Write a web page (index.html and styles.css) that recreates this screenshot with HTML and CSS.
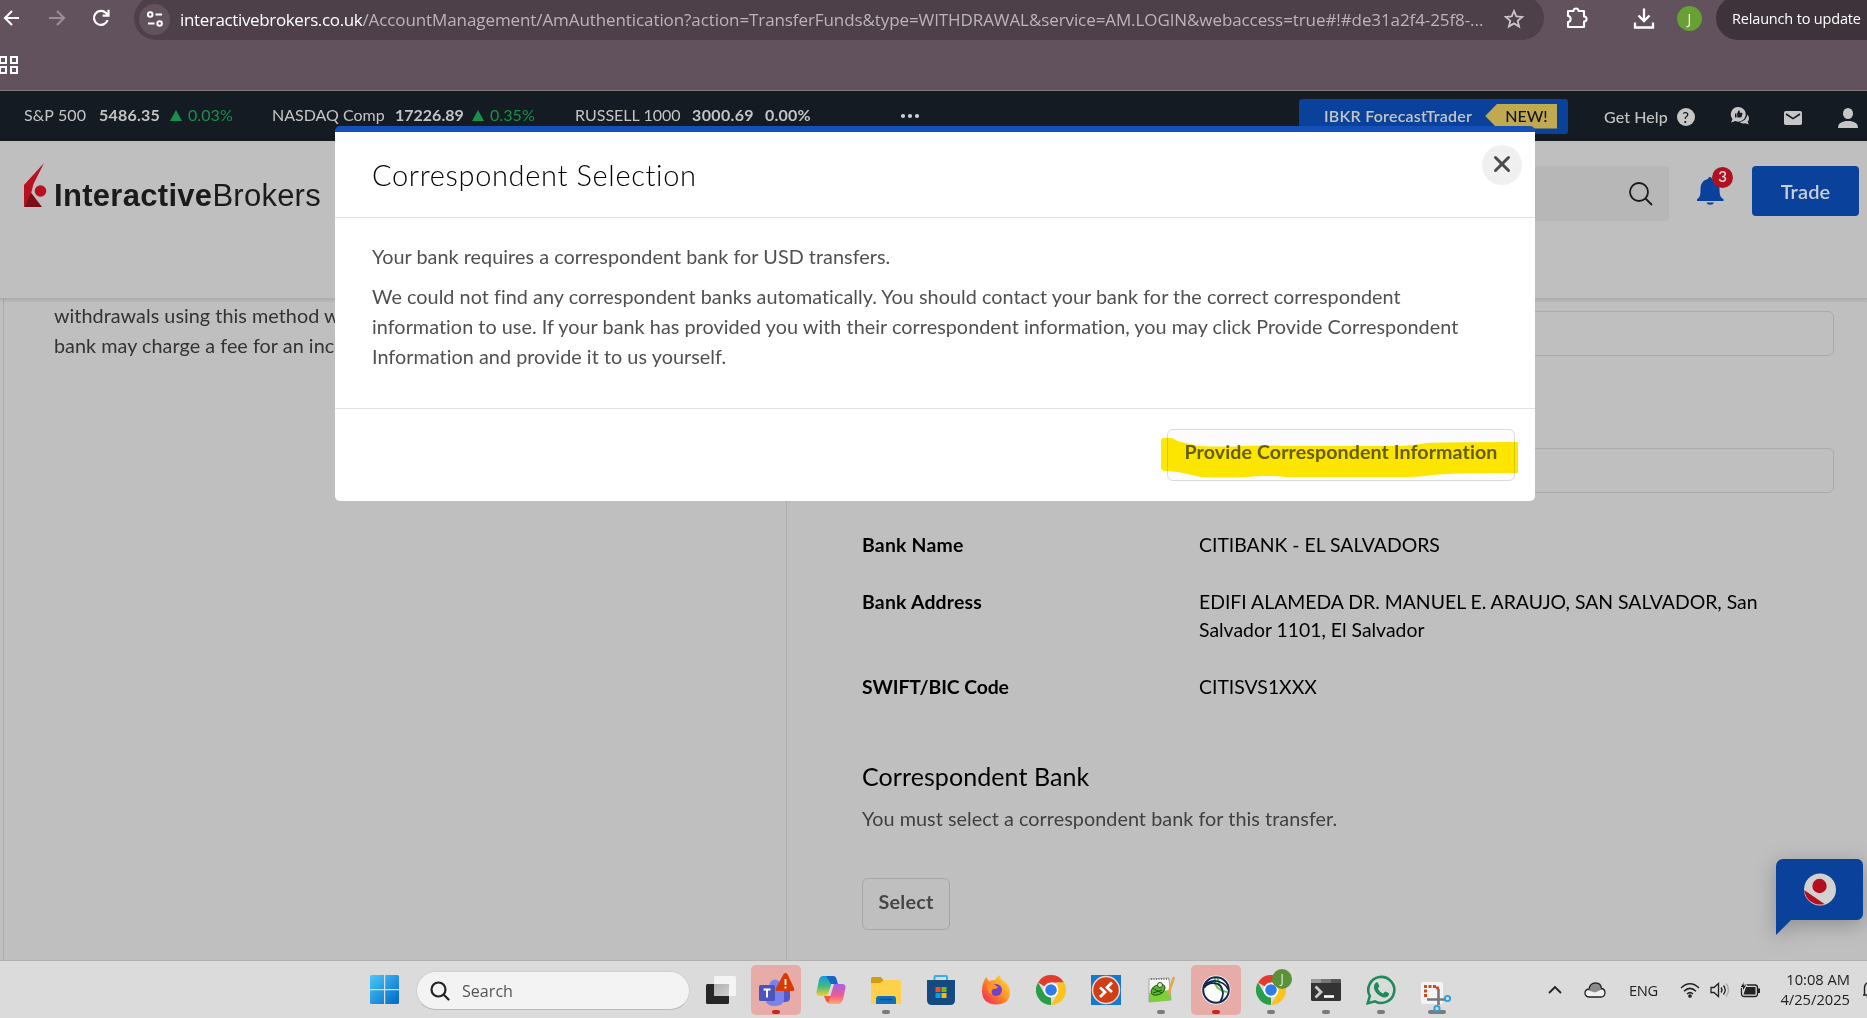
FILE: index.html
```html
<!DOCTYPE html>
<html lang="en">
<head>
<meta charset="utf-8">
<title>Correspondent Selection</title>
<link rel="stylesheet" href="styles.css">
</head>
<body>
<div class="browser">
  <div class="toolbar">
    <svg class="tb-back" width="24" height="24" viewBox="0 0 24 24" fill="none" stroke="#fff" stroke-width="2.1"><path d="M19 12H5M12 5l-7 7 7 7"/></svg>
    <svg class="tb-fwd" width="24" height="24" viewBox="0 0 24 24" fill="none" stroke="#9b8f97" stroke-width="2.1"><path d="M4 12h15M12 5l7 7-7 7"/></svg>
    <svg class="tb-reload" width="24" height="24" viewBox="0 0 24 24" fill="none" stroke="#fff" stroke-width="2.2"><path d="M18.6 14.2a7 7 0 1 1-1.8-7.4L19 9"/><path d="M19.5 3.8v5.8h-5.8"/></svg>
    <div class="url">
      <span class="tune"><svg width="18" height="18" viewBox="0 0 18 18" fill="none" stroke="#fff" stroke-width="1.9"><circle cx="4.2" cy="4.5" r="2.3"/><path d="M9.5 4.5H16M2 13.5h6.5"/><circle cx="13.6" cy="13.5" r="2.3"/></svg></span>
      <span class="domain">interactivebrokers.co.uk</span><span class="path">/AccountManagement/AmAuthentication?action=TransferFunds&amp;type=WITHDRAWAL&amp;service=AM.LOGIN&amp;webaccess=true#!#de31a2f4-25f8-...</span>
      <svg class="star" width="22" height="22" viewBox="0 0 24 24" fill="none" stroke="#cdc5ca" stroke-width="1.9"><path d="M12 3.2l2.5 6 6.5.5-5 4.2 1.6 6.4-5.6-3.5-5.6 3.5L8 13.900 3 9.700l6.500-.5z"/></svg>
    </div>
    <svg class="tb-ext" width="24" height="24" viewBox="0 0 24 24" fill="none" stroke="#fff" stroke-width="2.1" stroke-linejoin="round"><path d="M3 5h5.500c0-3.400 5-3.400 5 0H19v5.500c3.400 0 3.400 5 0 5V21H3v-5c3.500-.3 3.500-5.700 0-6z"/></svg>
    <span class="tb-sep"></span>
    <svg class="tb-dl" width="24" height="24" viewBox="0 0 24 24" fill="none" stroke="#fff" stroke-width="2.3"><path d="M12 2.500v12M6.500 9.500l5.500 5.500 5.500-5.500M3 16.500V21.500h18v-5"/></svg>
    <span class="avatar">J</span>
    <span class="relaunch">Relaunch to update</span>
  </div>
  <svg class="apps" width="18" height="18" viewBox="0 0 18 18" fill="none" stroke="#fff" stroke-width="2"><path d="M0 1h6v6H0zM11 1h6v6h-6zM0 11h6v6H0zM11 11h6v6h-6z"/></svg>
</div>

<div class="ticker">
  <div class="quote q1"><span class="sym">S&amp;P 500</span><b>5486.35</b><i></i><em>0.03%</em></div>
  <div class="quote q2"><span class="sym">NASDAQ Comp</span><b>17226.89</b><i></i><em>0.35%</em></div>
  <div class="quote q3"><span class="sym">RUSSELL 1000</span><b>3000.69</b><b class="flat">0.00%</b></div>
  <svg class="dots" width="20" height="6" viewBox="0 0 20 6" fill="#d0d0d0"><circle cx="3" cy="3" r="2.100"/><circle cx="10" cy="3" r="2.100"/><circle cx="17" cy="3" r="2.100"/></svg>
  <div class="forecast"><span class="fc-name">IBKR ForecastTrader</span><span class="new">NEW!</span></div>
  <div class="help"><span>Get Help</span><span class="qmark">?</span></div>
  <svg class="t-chat" width="20" height="20" viewBox="0 0 20 20"><path fill="#c6c6c6" d="M8.500 1a7.300 7.300 0 1 1-3.200 13.900L1 16.500l1.500-3.600A7.300 7.300 0 0 1 8.500 1z"/><path fill="#151b22" d="M5 7.500h1.500v4H5zM7.200 7.300l1.500-3c1.300 0 1.300 1.200 1 2.500h2c1 0 .9 1 .6 1.600l-.8 2.500c-.3.800-4.300.6-4.300 0z"/><path fill="#c6c6c6" d="M17.200 8.500c2.600 2.600 2 6 .4 7.300l1.200 2.700-3.500-1.300c-2.500.6-4.600 0-5.800-1.400 4 0 7.700-3.200 7.700-7.300z"/></svg>
  <svg class="t-mail" width="18" height="14" viewBox="0 0 18 14"><rect width="18" height="14" rx="1.800" fill="#c6c6c6"/><path d="M2 3l7 4.600L16 3" fill="none" stroke="#151b22" stroke-width="1.700"/></svg>
  <svg class="t-user" width="20" height="20" viewBox="0 0 20 20" fill="#c6c6c6"><ellipse cx="10" cy="5.500" rx="5" ry="5.500"/><path d="M0 20c0-5 4-7 10-7s10 2 10 7z"/></svg>
</div>

<header class="site-header">
  <div class="logo">
    <svg width="24" height="44" viewBox="0 0 24 44"><path fill="#b90f20" d="M20 0L0 22v22l7-13.500L9.500 21z"/><path fill="#7d0e18" d="M0 44L7 29.500 18 44z"/><circle cx="16.500" cy="28" r="5.800" fill="#b90f20"/></svg>
    <span class="logo-bold">Interactive</span><span class="logo-light">Brokers</span>
  </div>
  <div class="search-box"><svg width="26" height="26" viewBox="0 0 26 26" fill="none" stroke="#1a1a1a" stroke-width="1.800"><circle cx="11" cy="11" r="9"/><path d="M17.500 17.500l6.500 6.500"/></svg></div>
  <div class="bell">
    <svg width="27" height="28" viewBox="0 0 27 28" fill="#0a429b"><path d="M13 0c1.500 0 2 1 2 2 5 1 7.500 5 7.500 10 0 6 1 8.500 4 10v2H0v-2c3-1.500 3.500-4 3.500-10 0-5 2.500-9 7.500-10 0-1 .5-2 2-2z"/><path d="M9.500 25.500h7.500c-1 3-6.500 3-7.500 0z"/></svg>
    <span class="badge">3</span>
  </div>
  <button class="trade">Trade</button>
</header>

<main class="content">
  <section class="left-panel">
    <p>withdrawals using this method will<br>bank may charge a fee for an incoming</p>
  </section>
  <section class="right-panel">
    <div class="field f1"></div>
    <div class="field f2"></div>
    <dl class="details">
      <dt>Bank Name</dt><dd>CITIBANK - EL SALVADORS</dd>
      <dt>Bank Address</dt><dd>EDIFI ALAMEDA DR. MANUEL E. ARAUJO, SAN SALVADOR, San<br>Salvador 1101, El Salvador</dd>
      <dt class="swift">SWIFT/BIC Code</dt><dd>CITISVS1XXX</dd>
    </dl>
    <h2>Correspondent Bank</h2>
    <p class="note">You must select a correspondent bank for this transfer.</p>
    <button class="select">Select</button>
  </section>
</main>

<div class="chat-widget">
  <svg width="88" height="77" viewBox="0 0 88 77"><path fill="#0a429b" d="M7 0h74a6 6 0 0 1 6 6v49a6 6 0 0 1-6 6H15L0 76V7a7 7 0 0 1 7-7z"/><circle cx="44" cy="30.500" r="16" fill="#d2d2d2"/><path fill="#b51020" d="M28.200 31l20.300 14A16 16 0 0 1 28.200 31z"/><circle cx="43.500" cy="27" r="7.200" fill="#b51020"/></svg>
</div>

<div class="modal">
  <div class="modal-head">
    <h1>Correspondent Selection</h1>
    <button class="close"><svg width="18" height="18" viewBox="0 0 18 18" stroke="#4a4a4a" stroke-width="3" stroke-linecap="round"><path d="M2.500 2.500l13 13M15.500 2.500l-13 13"/></svg></button>
  </div>
  <div class="modal-body">
    <p class="l1">Your bank requires a correspondent bank for USD transfers.</p>
    <p>We could not find any correspondent banks automatically. You should contact your bank for the correct correspondent<br>information to use. If your bank has provided you with their correspondent information, you may click Provide Correspondent<br>Information and provide it to us yourself.</p>
  </div>
  <div class="modal-foot">
    <button class="provide">Provide Correspondent Information</button>
    <svg class="marker" width="358" height="40" viewBox="0 0 358 40"><path fill="#ffe800" d="M0 2q0-2 3-2l8 0q6 4 14 5l12 3q30 1 45 0t40 0h110q20 0 34-3 15-1 91-1v31q-70 0-85 2-12 2-26 2H125q-20-2-40 0-20 1-45 0l-23-5-12-1q-5 0-5-3z"/></svg>
  </div>
</div>

<footer class="taskbar">
  <div class="tk win"><svg width="30" height="30" viewBox="0 0 30 30"><defs><linearGradient id="w" x1="0" y1="0" x2="1" y2="1"><stop offset="0" stop-color="#4cc8fb"/><stop offset="1" stop-color="#0067c5"/></linearGradient></defs><path fill="url(#w)" d="M1.500 0H14v14H0V1.500Q0 0 1.500 0zM15.200 0h12.300Q29 0 29 1.500V14H15.200zM0 15.200h14V29H1.500Q0 29 0 27.500zM15.200 15.200H29v12.300q0 1.500-1.500 1.500H15.200z"/></svg></div>
  <div class="tk-search"><svg width="20" height="20" viewBox="0 0 20 20" fill="none" stroke="#222" stroke-width="2.200" stroke-linecap="round"><circle cx="8.500" cy="8.500" r="7"/><path d="M13.800 13.800L18.500 18.500"/></svg><span>Search</span></div>
  <div class="tk"><svg width="30" height="28" viewBox="0 0 30 28"><defs><linearGradient id="tv" x1="0" y1="0" x2="1" y2="1"><stop offset="0" stop-color="#b0b0b0"/><stop offset="1" stop-color="#cfcfcf"/></linearGradient></defs><rect y="8" width="23" height="20" rx="1.500" fill="#262626"/><rect x="8" width="22" height="20" rx="1.500" fill="#f4f4f4"/><path d="M8 8h15v12H8z" fill="url(#tv)"/></svg></div>
  <div class="tk alert run"><svg width="38" height="36" viewBox="0 0 38 36"><circle cx="18" cy="13" r="5.500" fill="#7b83eb"/><circle cx="28" cy="15" r="4" fill="#5059c9"/><path fill="#5059c9" d="M24 17h9v9q0 4-5 4h-4z"/><path fill="#7b83eb" d="M9 17h18v10q0 7-9 7t-9-6z"/><rect x="2" y="13" width="16" height="16" rx="1.500" fill="#4b53bc"/><path d="M6.500 17.500h7M10 17.500v8" stroke="#fff" stroke-width="1.900"/><path fill="#d83b01" d="M28.500 1q1.300 0 2 1.300L37 16q1 3-1.500 3h-15q-2.500 0-1.500-3L26.500 2.300Q27.200 1 28.500 1z"/><path d="M28.500 7v6M28.500 14.500v2" stroke="#fff" stroke-width="1.800"/></svg></div>
  <div class="tk"><svg width="30" height="28" viewBox="0 0 30 28"><defs><linearGradient id="c1" x1="0" y1="0" x2="0" y2="1"><stop offset="0" stop-color="#159be0"/><stop offset=".5" stop-color="#42b883"/><stop offset="1" stop-color="#f5d02b"/></linearGradient><linearGradient id="c2" x1="0" y1="0" x2="0" y2="1"><stop offset="0" stop-color="#a661e8"/><stop offset=".6" stop-color="#ef5d8b"/><stop offset="1" stop-color="#ffac6b"/></linearGradient></defs><path fill="url(#c1)" d="M7 0h11L12 18q-1 2-4 2H4q-4 0-3.500-4L3 4q1-4 4-4z"/><path fill="#1765c4" d="M10 0h7q3 0 3.500 3l1.500 5h-7z"/><path fill="#ee5a2b" d="M8 20h7l-1 6q-2 2-4-1z"/><path fill="url(#c2)" d="M18 8h8q4 0 3.500 4L27 23q-1 5-5 5H12z"/></svg></div>
  <div class="tk run"><svg width="30" height="27" viewBox="0 0 30 27"><path fill="#d49a12" d="M0 2q0-2 2-2h8l3 4-2 3H0z"/><path fill="#ffd04a" d="M0 6h9l4-3h15q2 0 2 2v22H0z"/><path fill="#0f70c0" d="M5 27v-5q0-3 3-3h14q3 0 3 3v5z"/><path d="M9 22.500h12" stroke="#0b4f90" stroke-width="1.500"/></svg></div>
  <div class="tk"><svg width="30" height="30" viewBox="0 0 30 30"><path d="M8.500 5V2q0-1 1-1h10.500q1 0 1 1v3" fill="none" stroke="#35b0ea" stroke-width="2"/><path fill="#154a80" d="M1 5h28v20q0 5-5 5H6q-5 0-5-5z"/><path fill="#f25022" d="M9.500 12h5v5h-5z"/><path fill="#7fba00" d="M15.500 12h5v5h-5z"/><path fill="#00a4ef" d="M9.500 18h5v5h-5z"/><path fill="#ffb900" d="M15.500 18h5v5h-5z"/></svg></div>
  <div class="tk"><svg width="30" height="30" viewBox="0 0 30 30"><defs><linearGradient id="f" x1="1" y1="0" x2="0" y2="1"><stop offset="0" stop-color="#fff04a"/><stop offset=".5" stop-color="#ff8a24"/><stop offset="1" stop-color="#f0195e"/></linearGradient></defs><path fill="url(#f)" d="M3 6l2-4 3 4q3-1 6-1 1-3 5-5 0 4 4 6 6 4 6 11 0 12-13.500 12.500Q1 29 1 16q0-6 2-10z"/><circle cx="15" cy="15" r="6" fill="#7340d0"/><path fill="#ff9420" d="M6 10q5-3 8 0l3 2q-1 2-5 2-3 3 0 6-6-1-6-10z"/></svg></div>
  <div class="tk"><svg width="30" height="30" viewBox="0 0 48 48"><path fill="#e33b2e" d="M24 24L3.200 12A24 24 0 0 1 44.800 12H24z"/><path fill="#2a9d4a" d="M3.200 12L13.600 30 24 36 24 48A24 24 0 0 1 3.200 12z"/><path fill="#fcc31e" d="M44.800 12A24 24 0 0 1 24 48l10.400-18L34 12z"/><circle cx="24" cy="24" r="12" fill="#fff"/><circle cx="24" cy="24" r="9.300" fill="#2f7bea"/></svg></div>
  <div class="tk"><svg width="30" height="30" viewBox="0 0 30 30"><path fill="#1579cf" d="M0 0h30v30H0z"/><circle cx="15" cy="15" r="13.500" fill="#cf3e14" stroke="#f3d6cc" stroke-width="1.500"/><path d="M9 12.500l5 4.500-5 5M21 7.500l-5 5 5 4.500" fill="none" stroke="#fff" stroke-width="2.800"/></svg></div>
  <div class="tk run"><svg width="30" height="30" viewBox="0 0 30 30"><path fill="#f8f8f2" stroke="#8a8a8a" stroke-width=".7" d="M3 4l20-1 2 22-22 2z"/><path fill="#7ccf34" d="M3 18l21-3 1 10-22 2z"/><path fill="#54b72a" stroke="#24521a" d="M5 16q2-6 8-6 6-2 6 3-1 6-8 7-6 1-6-4z"/><circle cx="14" cy="10" r="2.500" fill="#dff2c8" stroke="#24521a"/><path d="M7 18l9-3M6 13l10 5" stroke="#24521a"/><path d="M5 4h18" stroke="#777" stroke-width="2" stroke-dasharray="1 1.500"/><path d="M28 2l-6 18" stroke="#dfa64b" stroke-width="2.500"/></svg></div>
  <div class="tk alert run"><svg width="30" height="30" viewBox="0 0 30 30"><circle cx="15" cy="15" r="14.500" fill="#fff"/><path d="M14 3q-2 11 12 14M18 11q1-4-2-8" fill="none" stroke="#6cc04a" stroke-width="2"/><circle cx="15" cy="15" r="12.800" fill="none" stroke="#14284f" stroke-width="2"/><path d="M3 13q3-5 9-5 9 0 10 10 0 5-3 9M4 9.500q8-6 16-2 5 2 7 7" fill="none" stroke="#14284f" stroke-width="1.800"/></svg></div>
  <div class="tk run chrome-user"><svg width="30" height="30" viewBox="0 0 48 48"><path fill="#e33b2e" d="M24 24L3.200 12A24 24 0 0 1 44.800 12H24z"/><path fill="#2a9d4a" d="M3.200 12L13.600 30 24 36 24 48A24 24 0 0 1 3.200 12z"/><path fill="#fcc31e" d="M44.800 12A24 24 0 0 1 24 48l10.400-18L34 12z"/><circle cx="24" cy="24" r="12" fill="#fff"/><circle cx="24" cy="24" r="9.300" fill="#2f7bea"/></svg><span class="jbadge">J</span></div>
  <div class="tk run"><svg width="30" height="22" viewBox="0 0 30 22"><rect width="30" height="22" rx="1.500" fill="#333"/><path fill="#999" d="M0 1.500Q0 0 1.500 0H10v4H0z"/><path fill="#777" d="M10 0h10v4H10z"/><path fill="#555" d="M20 0h8.500Q30 0 30 1.500V4H20z"/><path d="M4.500 7.500l5.500 5.500-5.500 5.500" fill="none" stroke="#ccc" stroke-width="2.800"/><path d="M13 17.500h10" stroke="#fff" stroke-width="2.600"/></svg></div>
  <div class="tk run"><svg width="30" height="30" viewBox="0 0 30 30"><path d="M1.800 28.200l2-7.200A13 13 0 1 1 9 26.300z" fill="none" stroke="#1f8a5b" stroke-width="2.600"/><path fill="#1f8a5b" d="M10 7.500q1.500-.5 2 .5l1.300 3q0 1-1.500 2.500 2 4 5.500 5 1.500-2 2.300-2l3 1.500q1 .7 0 2.500-1.500 2.500-5 2-7-2-9.500-8.500-.8-4.500 1.900-6.500z"/></svg></div>
  <div class="tk run wide"><svg class="snip" width="30" height="32" viewBox="0 0 30 32"><rect y="1" width="22" height="22" rx="2" fill="#f4f4f4"/><path d="M4.500 16V5.500H16.500V9" fill="none" stroke="#cf4a24" stroke-width="3" stroke-dasharray="3 1.500"/><path d="M17.500 8v16M6 18.500h18" stroke="#777" stroke-width="2.600"/><circle cx="26.500" cy="17.500" r="2.600" fill="none" stroke="#2a9fe0" stroke-width="1.900"/><circle cx="16" cy="27.500" r="2.600" fill="none" stroke="#2a9fe0" stroke-width="1.900"/></svg></div>
  <div class="tray">
    <svg class="chev" width="14" height="9" viewBox="0 0 14 9" fill="none" stroke="#222" stroke-width="1.800"><path d="M1 8l6-6 6 6"/></svg>
    <svg class="cloud" width="22" height="16" viewBox="0 0 22 16"><path fill="#efefef" d="M5 15Q1 14.500 1 11t4-4q1-6 6.500-6t6 5.500Q21 7 21 11q-.5 4-4 4z"/><path fill="#8b8b8b" d="M3 8l2-1.500q1-5 6.500-5t6.500 6l-7 3z"/><path fill="none" stroke="#222" stroke-width="1.300" d="M5 15Q1 14.500 1 11t4-4q1-6 6.500-6t6 5.500Q21 7 21 11q-.5 4-4 4z"/></svg>
    <span class="eng">ENG</span>
    <svg class="wifi" width="20" height="16" viewBox="0 0 20 16" fill="none" stroke="#222" stroke-width="1.500"><path d="M1 6q9-8.500 18 0M4 9.200q6-5.600 12 0M7 12q3-2.800 6 0"/><circle cx="10" cy="14" r="1.100" fill="#222"/></svg>
    <svg class="vol" width="20" height="16" viewBox="0 0 20 16" fill="none" stroke="#222" stroke-width="1.300"><path d="M1 5.500h3L8.500 1.500v13L4 10.500H1z"/><path d="M11 5.500q2 2.500 0 5M13.500 3.500q3.500 4.500 0 9"/><path stroke="#aaa" d="M16 1.500q5 6.500 0 13"/></svg>
    <svg class="bat" width="20" height="17" viewBox="0 0 20 17"><rect x="1.500" y="4" width="16" height="11.500" rx="2.500" fill="none" stroke="#222" stroke-width="1.300"/><path fill="#222" d="M6 6h9.500v7.500h-12zM18 7.500h2v4.500h-2z"/><path fill="#222" stroke="#dbdbdb" stroke-width="1" d="M4 0v4h3L2.500 10.500V6.500H0z"/></svg>
    <div class="clock"><span class="time">10:08 AM</span><span class="date">4/25/2025</span></div>
    <svg class="tbell" width="14" height="18" viewBox="0 0 14 18" fill="none" stroke="#222" stroke-width="1.400"><path d="M1 14h13M2.500 14V7q0-6 7-6M5 15.500q1 2 4 2M5 8h4M5 11h3"/></svg>
  </div>
</footer>
</body>
</html>
```
FILE: styles.css
```css
* { box-sizing: border-box; }
body { margin: 0; width: 1867px; height: 1018px; overflow: hidden; position: relative; display: flex; flex-direction: column; background: #bfbfbf; font-family: Lato, "Liberation Sans", sans-serif; font-size: 19.8px; font-variant-ligatures: none; }
h1, h2, p, dl, dd { margin: 0; font-weight: 400; }
button { font: inherit; padding: 0; }
svg { flex: none; display: block; }

.browser { height: 91px; flex: none; background: #62525d; border-bottom: 1px solid #83777f; font-family: "Open Sans", "Noto Sans", sans-serif; }
.toolbar { height: 36px; display: flex; align-items: center; }
.tb-fwd { margin-left: 21px; }
.tb-reload { margin-left: 20px; }
.url { width: 1410px; height: 44px; flex: none; margin-left: 21px; border-radius: 22px; background: #4d4049; display: flex; align-items: center; font-size: 17px; white-space: nowrap; color: #bdb4ba; padding: 2px 19px 0 5px; }
.tune { width: 31px; height: 31px; border-radius: 50%; background: #62525d; display: flex; align-items: center; justify-content: center; flex: none; margin-right: 10px; }
.domain { color: #fff; letter-spacing: -.36px; }
.path { letter-spacing: -.09px; }
.star { margin-left: auto; }
.tb-ext { margin-left: 21px; }
.tb-sep { width: 2px; height: 20px; background: #4d4049; margin-left: 20px; }
.tb-dl { margin-left: 23px; }
.avatar { width: 25px; height: 25px; flex: none; margin-left: 21px; border-radius: 50%; background: #68a034; color: #fff; font-size: 14px; display: flex; align-items: center; justify-content: center; }
.relaunch { height: 44px; width: 180px; flex: none; margin-left: 14px; border-radius: 22px; background: #3e333b; color: #fff; font-size: 14.5px; letter-spacing: -.17px; line-height: 46px; padding-left: 16px; white-space: nowrap; }
.apps { margin-top: 20px; }

.ticker { height: 50px; flex: none; background: #151b22; color: #c4c4c4; font-size: 16px; display: flex; align-items: center; white-space: nowrap; }
.quote { display: flex; align-items: center; padding-bottom: 4px; }
.quote i { border: 6px solid transparent; border-top: 0; border-bottom: 11px solid #17914b; margin: 2px 0 0 9px; }
.quote em { font-style: normal; color: #17914b; letter-spacing: .08px; margin-left: 6px; }
.q1 { margin-left: 24px; width: 248px; }
.q1 .sym { width: 75px; letter-spacing: .15px; }
.q1 b { width: 62px; letter-spacing: .2px; }
.q2 { width: 303px; }
.q2 .sym { width: 123px; }
.q2 b { width: 68px; }
.q3 { width: 325px; }
.q3 .sym { width: 117px; }
.q3 b { width: 73px; letter-spacing: .35px; }
.q3 b.flat { width: auto; letter-spacing: .2px; }
.forecast { margin: 0 0 0 379px; width: 269px; height: 35px; background: #0a429b; border-radius: 3px; display: flex; align-items: center; padding-left: 25px; font-weight: 600; letter-spacing: .23px; flex: none; }
.fc-name { padding-bottom: 1px; }
.new { margin-left: 13px; width: 72px; height: 25px; background: #c1a94f; clip-path: polygon(0 50%, 17% 0, 100% 0, 100% 100%, 17% 100%); color: #111; line-height: 24px; padding-left: 20px; font-weight: 500; letter-spacing: 0; }
.help { margin-left: 36px; display: flex; align-items: center; font-weight: 500; letter-spacing: .08px; padding-top: 1px; flex: none; width: 126px; }
.qmark { width: 18px; height: 18px; border-radius: 50%; background: #c6c6c6; color: #151b22; font-size: 15px; line-height: 18px; text-align: center; margin-left: 9px; }
.t-mail { margin: 3px 0 0 34px; }
.t-user { margin: 3px 0 0 36px; }

.site-header { height: 158px; flex: none; display: flex; align-items: flex-start; border-bottom: 1px solid #adadad; box-shadow: 0 1px 4px rgba(0,0,0,.15); position: relative; }
.logo { display: flex; margin: 22px 0 0 24px; color: #1b1b1b; font-family: "Liberation Sans", Arial, sans-serif; font-size: 31px; line-height: 36px; }
.logo span { padding-top: 15px; }
.logo-bold { font-weight: 700; margin-left: 6px; letter-spacing: .3px; }
.logo-light { letter-spacing: .25px; }
.search-box { margin: 25px 0 0 auto; width: 400px; height: 55px; background: #b7b7b7; border-radius: 4px; display: flex; align-items: center; justify-content: flex-end; padding-right: 15px; }
.bell { position: relative; margin: 36px 28px 0 28px; width: 27px; }
.badge { position: absolute; left: 15px; top: -10px; width: 21px; height: 21px; border-radius: 50%; background: #b01020; color: #ddd; font-size: 15px; font-weight: 600; line-height: 18px; text-align: center; }
.trade { margin: 25px 8px 0 0; width: 107px; height: 50px; border: 0; border-radius: 4px; background: #0a429b; color: #c9cdd4; font-weight: 600; font-size: 20px; letter-spacing: .15px; line-height: 50px; }

.content { height: 661px; flex: none; display: flex; margin-left: 3px; border-left: 1px solid #acacac; color: #333; line-height: 30px; overflow: hidden; }
.left-panel { width: 783px; flex: none; border-right: 1px solid #acacac; padding: 1px 0 0 50px; white-space: nowrap; letter-spacing: .04px; }
.right-panel { flex: 1; padding: 12px 0 0 75px; color: #000; }
.field { height: 45px; width: 972px; border: 1px solid #aaa; border-radius: 6px; }
.f2 { margin-top: 92px; }
.details { display: grid; grid-template-columns: 337px 1fr; row-gap: 29px; line-height: 28px; margin-top: 38px; }
.details dt { font-weight: 700; font-size: 19.4px; letter-spacing: .22px; }
.details dt.swift { letter-spacing: -.1px; }
.details dd { font-size: 19.4px; }
.right-panel h2 { font-size: 25px; letter-spacing: .08px; margin-top: 60px; }
.note { color: #404040; letter-spacing: .05px; margin: 12px 0 0 0; }
.select { display: block; width: 88px; height: 52px; margin-top: 45px; border: 1px solid #a5a5a5; border-radius: 6px; background: transparent; color: #464646; font-weight: 700; letter-spacing: .2px; line-height: 45px; padding-bottom: 5px; }

.chat-widget { position: absolute; left: 1776px; top: 859px; filter: drop-shadow(0 5px 10px rgba(0,0,0,.25)); }

.modal { position: absolute; left: 335px; top: 126px; width: 1200px; height: 375px; background: #fff; border-top: 6px solid #1450b8; border-radius: 5px; color: #505050; display: flex; flex-direction: column; }
.modal-head { height: 86px; border-bottom: 1px solid #e2e2e2; display: flex; justify-content: space-between; padding: 13px 13px 0 37px; }
.modal h1 { font-size: 29px; font-weight: 300; color: #000; letter-spacing: .65px; line-height: 59px; }
.close { width: 40px; height: 40px; border: 0; border-radius: 50%; background: #f0f0f0; display: flex; align-items: center; justify-content: center; padding-bottom: 2px; }
.modal-body { height: 191px; border-bottom: 1px solid #e2e2e2; padding: 23px 0 0 37px; line-height: 30px; letter-spacing: .045px; white-space: nowrap; }
.l1 { margin-bottom: 10px; }
.modal-foot { position: relative; display: flex; justify-content: flex-end; padding: 20px 20px 0 0; }
.provide { width: 348px; height: 52px; border: 1px solid #dadada; border-radius: 6px; background: #fcfcfc; color: #666; font-weight: 700; font-size: 19.6px; letter-spacing: .1px; padding-bottom: 7px; }
.marker { position: absolute; left: 826px; top: 29px; mix-blend-mode: multiply; }

.taskbar { position: relative; height: 58px; flex: none; background: #dbdbdb; border-top: 1px solid #b0b0b0; display: flex; align-items: flex-start; padding: 4px 0 0 360px; font-family: "Open Sans", "Noto Sans", sans-serif; color: #222; }
.tk { position: relative; width: 50px; height: 50px; margin-right: 5px; border-radius: 5px; display: flex; align-items: center; justify-content: center; flex: none; }
.win { margin-right: 6px; }
.tk-search { width: 274px; height: 39px; margin: 6px 6px 0 0; flex: none; border-radius: 20px; background: #f3f3f3; border: 1px solid #cfcfcf; border-bottom-color: #b8b8b8; display: flex; align-items: center; padding-left: 13px; gap: 12px; font-size: 16.1px; color: #555; }
.alert { background: #e8aca8; }
.run::after { content: ""; position: absolute; bottom: 1px; left: 21px; width: 8px; height: 4px; border-radius: 2px; background: #7b7b7b; }
.alert::after { background: #c42b1c; }
.wide::after { left: 17px; width: 18px; }
.snip { position: relative; top: 7px; z-index: 1; }
.jbadge { position: absolute; left: 26px; top: 4px; width: 20px; height: 20px; border-radius: 50%; background: #5b9138; color: #e8f0e0; font-size: 12px; line-height: 20px; text-align: center; }
.tray { position: relative; display: flex; align-items: center; height: 50px; margin-left: 82px; flex: none; font-size: 14.7px; }
.chev, .cloud, .wifi, .vol, .bat { margin-bottom: 1px; }
.cloud { margin-left: 22px; }
.eng { margin-left: 23px; width: 51px; letter-spacing: -.3px; }
.vol { margin-left: 10px; }
.bat { margin-left: 10px; }
.clock { width: 80px; margin-left: 10px; display: flex; flex-direction: column; align-items: flex-end; line-height: 20px; padding-bottom: 2px; }
.tbell { margin-left: 12px; }
```
